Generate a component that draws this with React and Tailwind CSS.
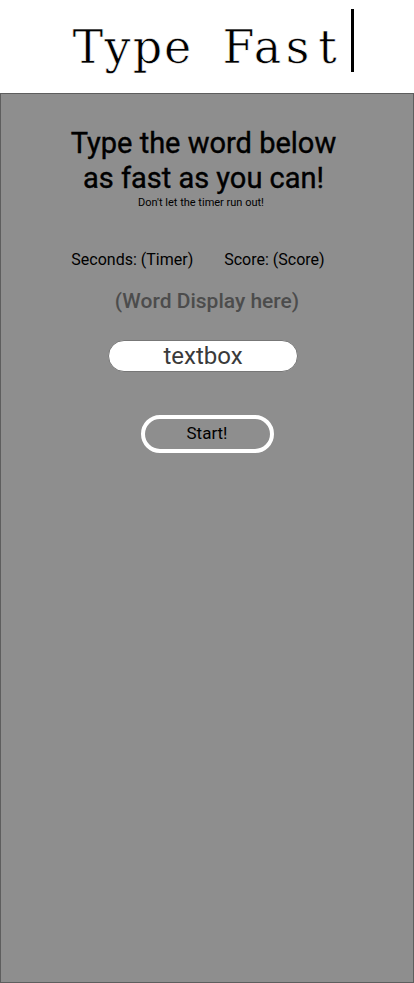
const title = 'Type Fast'.split('');

export default function App() {
  return (
    <div className="flex min-h-[983px] w-[414px] flex-col bg-white font-['Roboto',sans-serif]">
      <header className="flex h-[93px] items-center justify-center pl-[12px]">
        <h1
          className="flex font-['DejaVu_Serif',serif] text-[46px] leading-none text-black [-webkit-text-stroke:0.6px_white]"
          aria-label="Type Fast"
        >
          {title.map((ch, i) => (
            <span key={i} className="inline-block w-[30px] text-center">
              {ch === ' ' ? '\u00a0' : ch}
            </span>
          ))}
        </h1>
        <span className="mb-[12px] ml-[8px] h-[63px] w-[3px] bg-black" />
      </header>

      <main className="flex flex-1 flex-col items-center border border-[#5e5e5e] bg-[#8e8e8e] pt-[32px]">
        <h2 className="mr-[7px] text-center text-[29px] leading-[35px] text-black [-webkit-text-stroke:0.4px_black]">
          Type the word below
          <br />
          as fast as you can!
        </h2>
        <p className="mr-[12px] text-[11px] leading-[13px] text-black">Don't let the timer run out!</p>

        <div className="mr-[18px] mt-[39px] flex gap-[31px] text-[16px] text-black">
          <span>Seconds: (Timer)</span>
          <span>Score: (Score)</span>
        </div>

        <div className="mt-[14px] text-[21px] font-medium text-[#4c4c4c]">(Word Display here)</div>

        <input
          type="text"
          readOnly
          value="textbox"
          className="mr-[8px] mt-[22px] h-[32px] w-[190px] rounded-full border border-[#777] bg-white text-center text-[24px] text-[#3a3a3a] outline-none"
        />

        <button
          type="button"
          className="mt-[43px] h-[38px] w-[133px] rounded-full border-4 border-white text-[17px] text-black"
        >
          Start!
        </button>
      </main>
    </div>
  );
}
